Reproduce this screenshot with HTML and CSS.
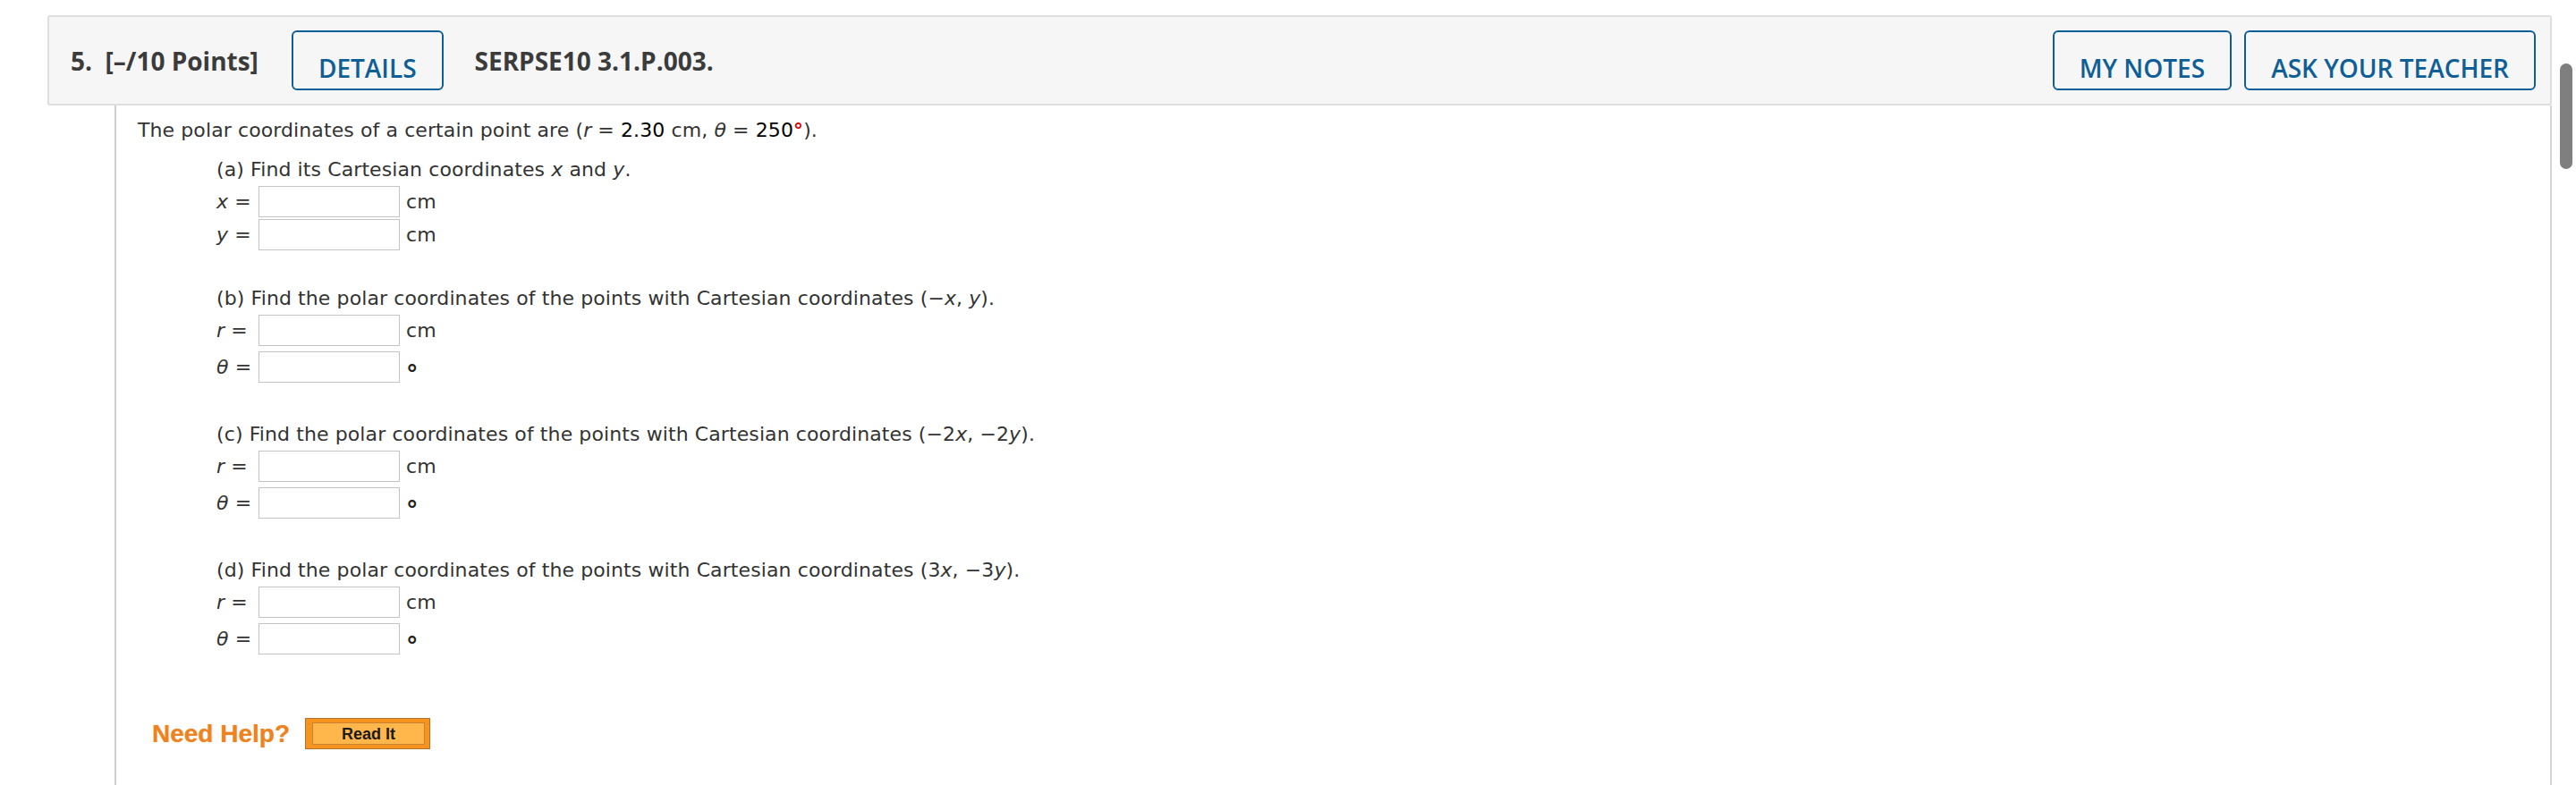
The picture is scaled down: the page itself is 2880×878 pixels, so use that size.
FILE: index.html
```html
<!DOCTYPE html>
<html lang="en">
<head>
<meta charset="utf-8">
<title>SERPSE10 3.1.P.003</title>
<link rel="stylesheet" href="styles.css">
</head>
<body>
<div class="question">
  <div class="q-header">
    <div class="q-title">5.&nbsp; [–/10 Points]</div>
    <button class="btn btn-details">DETAILS</button>
    <div class="q-code">SERPSE10 3.1.P.003.</div>
    <div class="spacer"></div>
    <button class="btn btn-notes">MY NOTES</button>
    <button class="btn">ASK YOUR TEACHER</button>
  </div>
  <div class="q-body">
    <p class="intro">The polar coordinates of a certain point are (<i>r</i> = <span class="val">2.30</span> cm, <i>θ</i> = <span class="val">250</span><span class="deg-red">°</span>).</p>

    <div class="part first">
      <div class="part-q">(a) Find its Cartesian coordinates <i>x</i> and <i>y</i>.</div>
      <div class="row"><span class="lbl"><i>x</i> =</span><input class="ans" type="text"><span class="unit">cm</span></div>
      <div class="row"><span class="lbl"><i>y</i> =</span><input class="ans" type="text"><span class="unit">cm</span></div>
    </div>

    <div class="part">
      <div class="part-q">(b) Find the polar coordinates of the points with Cartesian coordinates (−<i>x</i>, <i>y</i>).</div>
      <div class="row"><span class="lbl"><i>r</i> =</span><input class="ans" type="text"><span class="unit">cm</span></div>
      <div class="row tall"><span class="lbl"><i>θ</i> =</span><input class="ans" type="text"><span class="unit deg">°</span></div>
    </div>

    <div class="part">
      <div class="part-q">(c) Find the polar coordinates of the points with Cartesian coordinates (−2<i>x</i>, −2<i>y</i>).</div>
      <div class="row"><span class="lbl"><i>r</i> =</span><input class="ans" type="text"><span class="unit">cm</span></div>
      <div class="row tall"><span class="lbl"><i>θ</i> =</span><input class="ans" type="text"><span class="unit deg">°</span></div>
    </div>

    <div class="part">
      <div class="part-q">(d) Find the polar coordinates of the points with Cartesian coordinates (3<i>x</i>, −3<i>y</i>).</div>
      <div class="row"><span class="lbl"><i>r</i> =</span><input class="ans" type="text"><span class="unit">cm</span></div>
      <div class="row tall"><span class="lbl"><i>θ</i> =</span><input class="ans" type="text"><span class="unit deg">°</span></div>
    </div>

    <div class="help">
      <span class="help-label">Need Help?</span>
      <span class="read-it"><span class="read-it-inner">Read It</span></span>
    </div>
  </div>
</div>
<div class="scroll-thumb"></div>
</body>
</html>
```

FILE: styles.css
```css
html, body {
  margin: 0;
  padding: 0;
  background: #ffffff;
  overflow: hidden;
}

body {
  height: 878px;
}

.question {
  margin-left: 53px;
  width: 2800px;
}

.q-header {
  box-sizing: border-box;
  margin-top: 17px;
  height: 101px;
  display: flex;
  align-items: center;
  padding: 0 16px 0 24px;
  background: #f6f6f6;
  border: 2px solid #dedede;
  border-radius: 3px;
  font-family: "Open Sans", "Liberation Sans", sans-serif;
  color: #3b3b3b;
}

.q-title {
  font-size: 28px;
  font-weight: 700;
  line-height: 38px;
  margin-right: 37px;
  white-space: pre;
}

.q-code {
  font-size: 28px;
  font-weight: 700;
  line-height: 38px;
}

.spacer {
  flex: 1;
}

.btn {
  font-family: "Open Sans", "Liberation Sans", sans-serif;
  font-size: 28px;
  font-weight: 600;
  line-height: 38px;
  color: #0e5f97;
  background: transparent;
  border: 2px solid #0e5f97;
  border-radius: 6px;
  padding: 21px 28px 4px;
  margin: 0;
  cursor: pointer;
}

.btn-details {
  margin-right: 35px;
}

.btn-notes {
  margin-right: 14px;
}

.q-body {
  margin-left: 75px;
  border-left: 2px solid #cfcfcf;
  border-right: 2px solid #d6d6d6;
  padding: 15px 0 0 24px;
  height: 760px;
  font-family: "DejaVu Sans", Verdana, sans-serif;
  font-size: 22px;
  line-height: 26px;
  letter-spacing: 0.1px;
  color: #333333;
}

.intro {
  margin: 0;
}

.val {
  color: #000000;
}

.deg-red {
  color: #e00000;
  font-weight: 700;
}

.part {
  margin: 40px 0 0 88px;
}

.part.first {
  margin-top: 18px;
}

.part-q {
  margin-bottom: 4px;
}

.row {
  box-sizing: border-box;
  height: 37px;
  display: flex;
  align-items: center;
}

.row.tall {
  height: 45px;
  padding: 4px 0;
}

.lbl {
  width: 47px;
  flex: none;
}

.ans {
  box-sizing: border-box;
  width: 158px;
  height: 35px;
  margin: 0;
  padding: 0 6px;
  border: 1px solid #c4c4c4;
  background: #ffffff;
  font-family: "DejaVu Sans", Verdana, sans-serif;
  font-size: 20px;
}

.unit {
  margin-left: 7px;
}

.unit.deg {
  font-size: 27px;
  line-height: 26px;
  padding-top: 14px;
  font-weight: 700;
  color: #222222;
}

.help {
  display: flex;
  align-items: center;
  height: 35px;
  margin: 66px 0 0 16px;
}

.help-label {
  font-family: "Liberation Sans", Arial, sans-serif;
  font-size: 28px;
  font-weight: 700;
  letter-spacing: 0;
  color: #ef8220;
  margin-right: 17px;
  text-shadow: 0 0 1px rgba(239, 130, 32, 0.6);
}

.read-it {
  box-sizing: border-box;
  display: flex;
  width: 140px;
  height: 35px;
  padding: 4px 5px 4px 7px;
  background: #f7941e;
  border: 1px solid #b3702e;
}

.read-it-inner {
  flex: 1;
  display: flex;
  align-items: center;
  justify-content: center;
  background: #ffb74c;
  border: 1px solid #c88432;
  font-family: "Liberation Sans", Arial, sans-serif;
  font-size: 18px;
  font-weight: 700;
  letter-spacing: 0;
  color: #1a1a1a;
}

.scroll-thumb {
  position: fixed;
  top: 71px;
  right: 4px;
  width: 14px;
  height: 118px;
  border-radius: 7px;
  background: #7f7f7f;
}
```
